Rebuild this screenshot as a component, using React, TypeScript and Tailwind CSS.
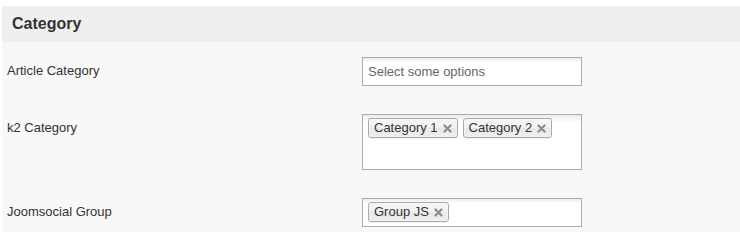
const font = { fontFamily: '"Liberation Sans", Arial, sans-serif' };

function CloseIcon() {
  return (
    <svg width="9" height="9" viewBox="0 0 9 9" className="ml-[5px] shrink-0">
      <path d="M1.5 1.5 L7.5 7.5 M7.5 1.5 L1.5 7.5" stroke="#8a8a8a" strokeWidth="2.2" strokeLinecap="round" />
    </svg>
  );
}

function Chip({ label }: { label: string }) {
  return (
    <span className="inline-flex items-center h-[20px] pl-[5px] pr-[5px] mr-[5px] mb-[4px] rounded-[3px] border border-[#aaaaaa] text-[13px] text-[#333333] bg-[linear-gradient(#f4f4f4_20%,#f0f0f0_50%,#e8e8e8_52%,#eeeeee_100%)] shadow-[inset_0_0_2px_#ffffff,0_1px_0_rgba(0,0,0,0.05)]">
      {label}
      <CloseIcon />
    </span>
  );
}

function Field({ children, className }: { children: React.ReactNode; className?: string }) {
  return (
    <div
      className={`w-[220px] border border-[#aaaaaa] bg-[linear-gradient(#eeeeee_1%,#ffffff_15%)] ${className ?? ""}`}
    >
      {children}
    </div>
  );
}

function Row({ label, children }: { label: string; children: React.ReactNode }) {
  return (
    <div className="flex items-start">
      <div className="w-[360px] pl-[5px] leading-[28px] text-[13px] text-[#333333]">{label}</div>
      {children}
    </div>
  );
}

export default function App() {
  return (
    <div className="w-[740px] h-[240px] bg-white pt-[6px] pl-[2px]" style={font}>
      <div className="h-[36px] bg-[#efefef] pl-[10px] flex items-center">
        <h3 className="text-[16px] font-bold text-[#333333]">Category</h3>
      </div>
      <div className="h-[190px] bg-[#f8f8f8] pt-[15px] flex flex-col gap-[28px]">
        <Row label="Article Category">
          <Field className="h-[29px] flex items-center pl-[5px]">
            <span className="text-[13px] text-[#666666]">Select some options</span>
          </Field>
        </Row>
        <Row label="k2 Category">
          <Field className="h-[56px] pl-[5px] pt-[3px] flex flex-wrap items-start content-start">
            <Chip label="Category 1" />
            <Chip label="Category 2" />
          </Field>
        </Row>
        <Row label="Joomsocial Group">
          <Field className="h-[29px] pl-[5px] pt-[3px] flex items-start">
            <Chip label="Group JS" />
          </Field>
        </Row>
      </div>
    </div>
  );
}
